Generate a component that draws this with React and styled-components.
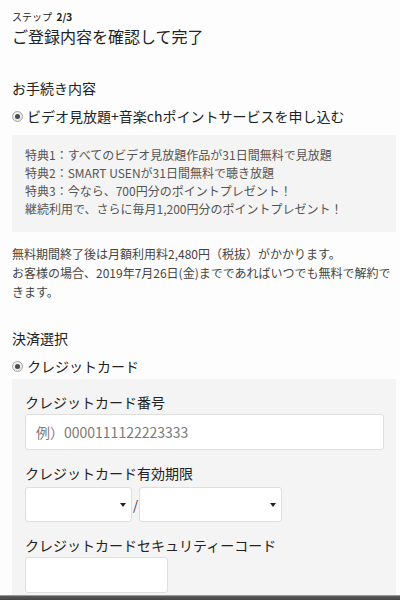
import styled, { createGlobalStyle } from "styled-components";

const GlobalStyle = createGlobalStyle`
  html, body {
    margin: 0;
    padding: 0;
    background: #fdfdfd;
  }
  * {
    box-sizing: border-box;
  }
  body {
    font-family: "Noto Sans CJK JP", "Noto Sans", sans-serif;
    color: #222;
  }
`;

export default function App() {
  return (
    <Screen>
      <GlobalStyle />
      <Main>
        <Step>
          ステップ&nbsp;&nbsp;<b>2/3</b>
        </Step>
        <Title>ご登録内容を確認して完了</Title>

        <SectionHeading>お手続き内容</SectionHeading>
        <RadioRow gap={9}>
          <Radio />
          <span>ビデオ見放題+音楽chポイントサービスを申し込む</span>
        </RadioRow>
        <InfoBox>
          <p>特典1：すべてのビデオ見放題作品が31日間無料で見放題</p>
          <p>特典2：SMART USENが31日間無料で聴き放題</p>
          <p>特典3：今なら、700円分のポイントプレゼント！</p>
          <p>継続利用で、さらに毎月1,200円分のポイントプレゼント！</p>
        </InfoBox>
        <Notes>
          無料期間終了後は月額利用料2,480円（税抜）がかかります。
          <br />
          お客様の場合、2019年7月26日(金)までであればいつでも無料で解約できます。
        </Notes>

        <SectionHeading top={27}>決済選択</SectionHeading>
        <RadioRow gap={3}>
          <Radio />
          <span>クレジットカード</span>
        </RadioRow>
        <FormBox>
          <Field>
            <Label>クレジットカード番号</Label>
            <TextInput placeholder="例）0000111122223333" />
          </Field>
          <Field>
            <Label>クレジットカード有効期限</Label>
            <SelectRow>
              <SelectBox width={107} />
              <Slash>/</Slash>
              <SelectBox width={143} />
            </SelectRow>
          </Field>
          <Field>
            <Label>クレジットカードセキュリティーコード</Label>
            <TextInput width={143} />
          </Field>
        </FormBox>
      </Main>
      <Frame />
    </Screen>
  );
}

const Screen = styled.div`
  height: 600px;
  display: flex;
  flex-direction: column;
  overflow: hidden;
`;

const Main = styled.main`
  flex: 1;
  overflow: hidden;
  padding: 10px 4px 0 12px;
`;

const Frame = styled.div`
  height: 5px;
  flex-shrink: 0;
  border-top: 1px solid #9a9a9a;
  background: linear-gradient(#5a5a5a, #444);
`;

const Step = styled.div`
  font-size: 10px;
  line-height: 14px;
  color: #222;

  b {
    font-weight: 700;
  }
`;

const Title = styled.h1`
  margin: 1px 0 0;
  font-size: 16px;
  line-height: 22px;
  font-weight: 400;
  color: #222;
`;

const SectionHeading = styled.h2`
  margin: ${(p) => p.top || 31}px 0 0;
  font-size: 14px;
  line-height: 20px;
  font-weight: 400;
  color: #222;
`;

const RadioRow = styled.label`
  display: flex;
  align-items: center;
  gap: 4px;
  margin: 8px 0 ${(p) => p.gap}px;
  font-size: 14px;
  line-height: 20px;
  color: #222;
`;

const Radio = styled.span`
  position: relative;
  width: 11px;
  height: 11px;
  flex-shrink: 0;
  border-radius: 50%;
  border: 1px solid #a6a6a6;
  background: radial-gradient(circle at 40% 35%, #fafafa, #dcdcdc);

  &::after {
    content: "";
    position: absolute;
    left: 2px;
    top: 2px;
    width: 5px;
    height: 5px;
    border-radius: 50%;
    background: #4a4a4a;
  }
`;

const InfoBox = styled.div`
  background: #f4f4f4;
  padding: 11px 13px 14px;

  p {
    margin: 0;
    font-size: 12px;
    line-height: 18px;
    color: #555;
  }
`;

const Notes = styled.p`
  margin: 12px 0 0;
  font-size: 12px;
  line-height: 19px;
  color: #444;
`;

const FormBox = styled.div`
  background: #f4f4f4;
  padding: 13px 12px 20px 13px;
`;

const Field = styled.div`
  & + & {
    margin-top: 13px;
  }
`;

const Label = styled.div`
  font-size: 14px;
  line-height: 20px;
  margin-bottom: 2px;
  color: #222;
`;

const TextInput = styled.input`
  display: block;
  width: ${(p) => (p.width ? `${p.width}px` : "100%")};
  height: 36px;
  padding: 0 10px;
  border: 1px solid #dedede;
  border-radius: 3px;
  background: #fff;
  font-family: inherit;
  font-size: 14px;
  color: #333;
  outline: none;

  &::placeholder {
    color: #7a7a7a;
  }
`;

const SelectRow = styled.div`
  display: flex;
  align-items: center;
  gap: 1px;
  padding-top: 2px;
`;

const SelectBox = styled.div`
  position: relative;
  width: ${(p) => p.width}px;
  height: 35px;
  border: 1px solid #dedede;
  border-radius: 3px;
  background: #fff;

  &::after {
    content: "";
    position: absolute;
    right: 5px;
    top: 15px;
    border-left: 3px solid transparent;
    border-right: 3px solid transparent;
    border-top: 4px solid #222;
  }
`;

const Slash = styled.span`
  font-size: 13px;
  line-height: 20px;
  color: #333;
`;
